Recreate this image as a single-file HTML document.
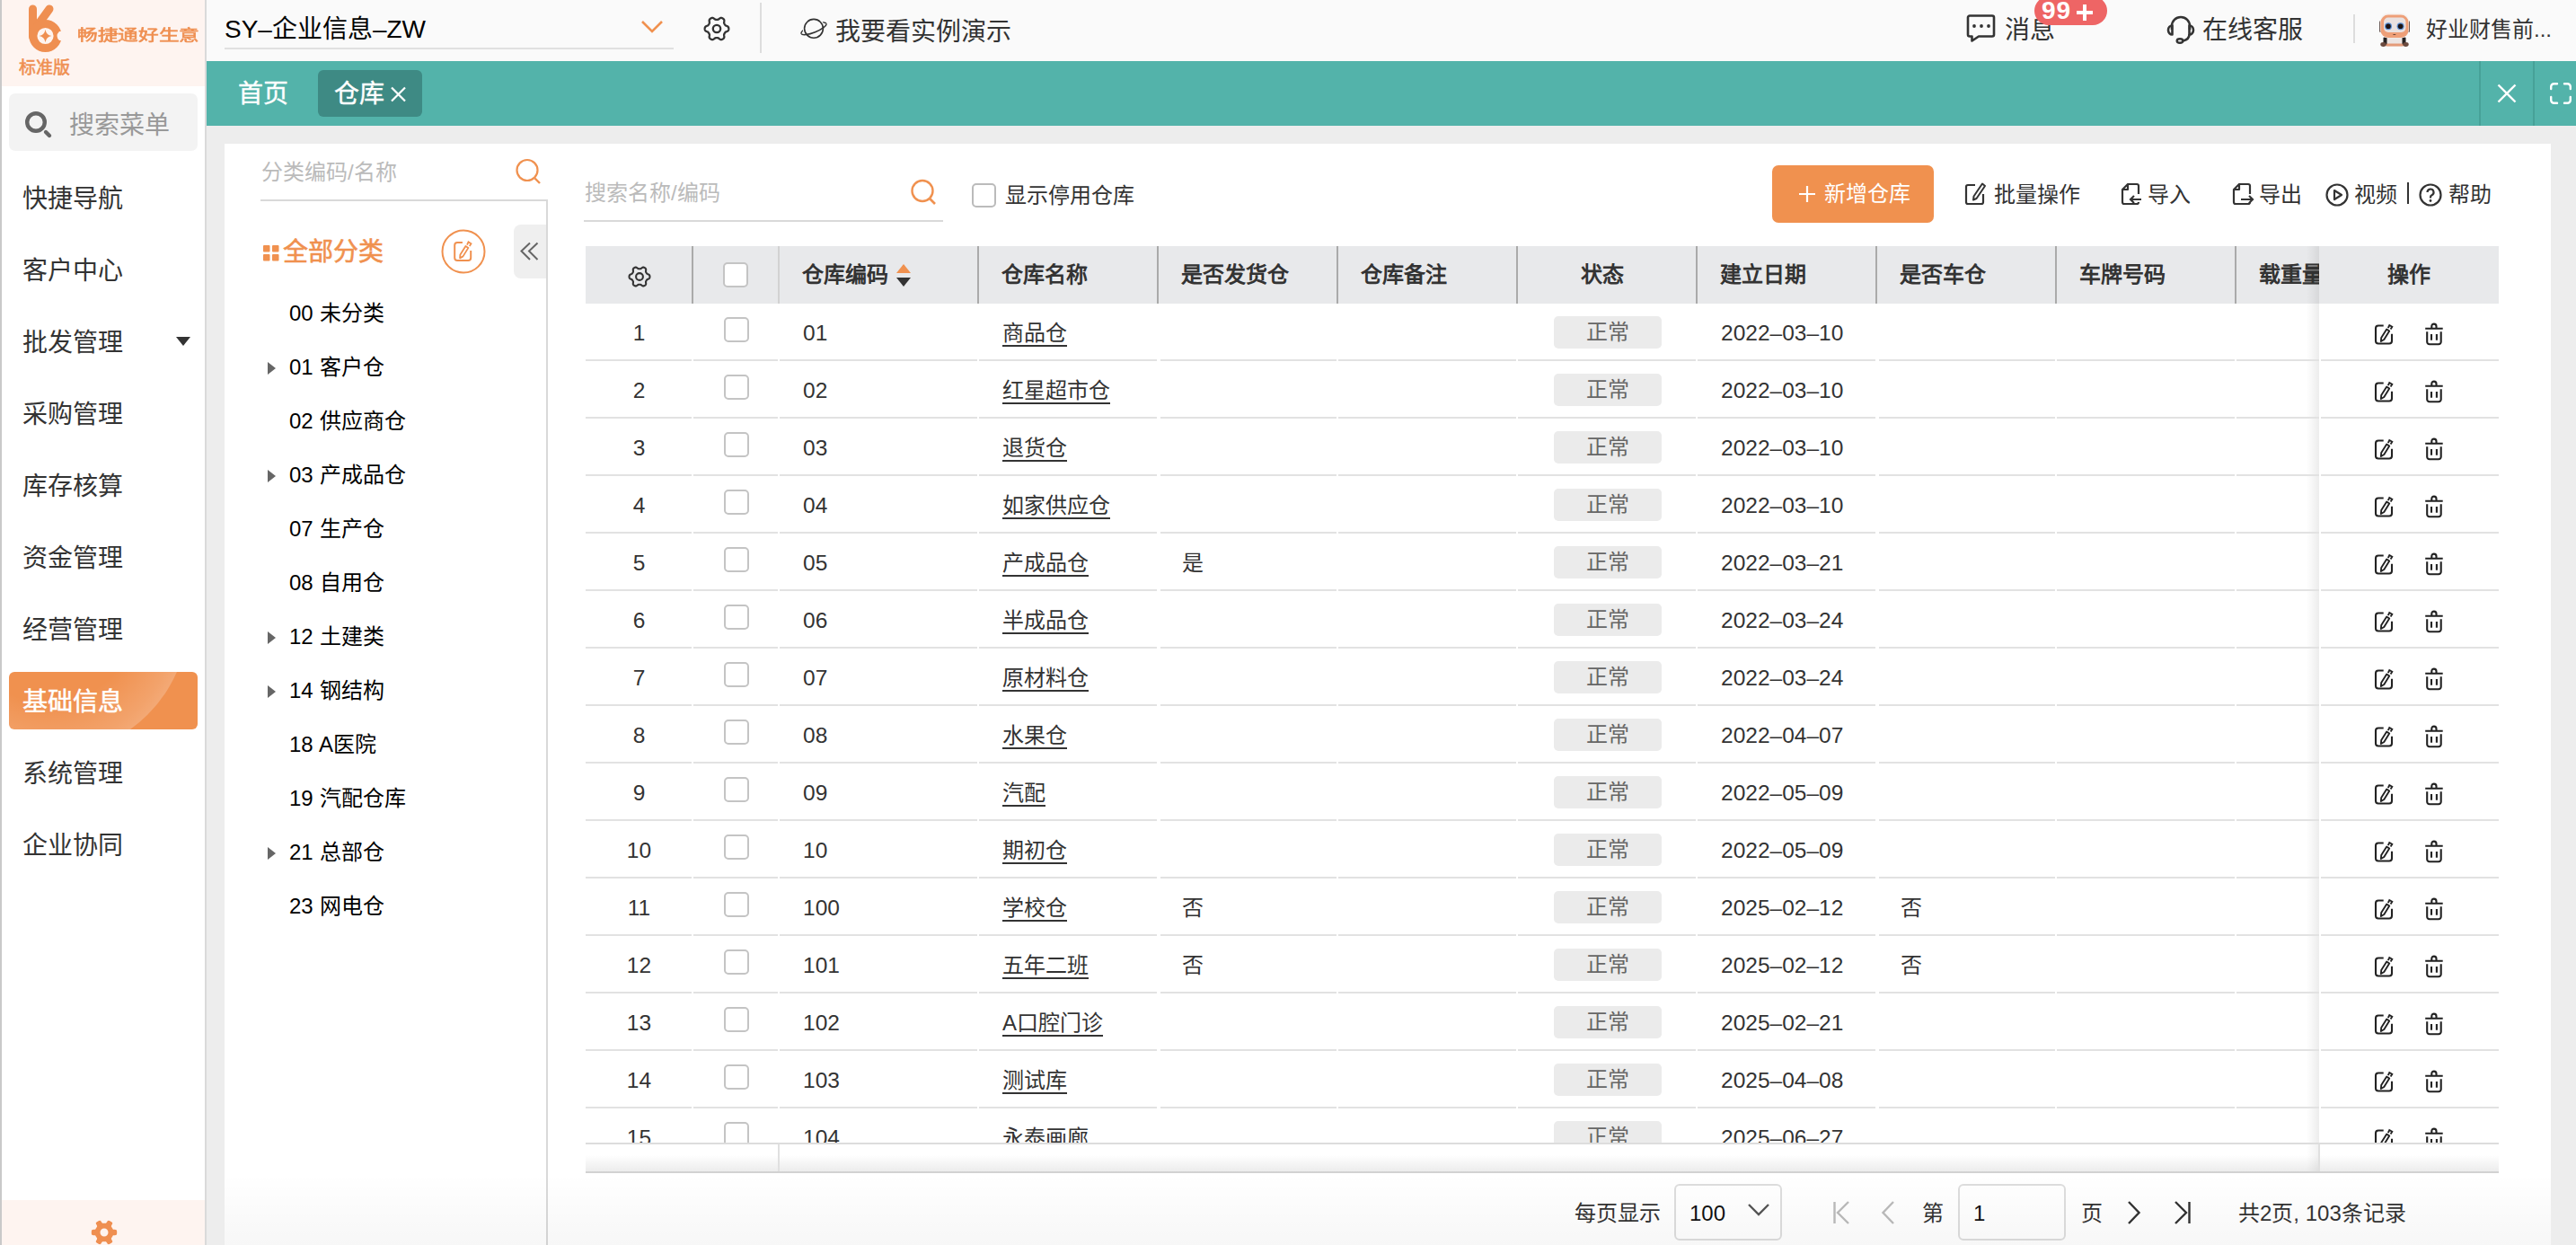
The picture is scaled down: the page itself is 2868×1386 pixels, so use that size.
<!DOCTYPE html>
<html lang="zh-CN">
<head>
<meta charset="utf-8">
<style>
*{box-sizing:border-box;margin:0;padding:0}
html,body{width:2868px;height:1386px;overflow:hidden}
body{position:relative;background:#EDEDED;font-family:"Liberation Sans",sans-serif;color:#333}
.a{position:absolute}
.t{position:absolute;white-space:nowrap;line-height:1}
svg{display:block;position:absolute}
#side{left:0;top:0;width:230px;height:1386px;background:#fff;border-left:2px solid #C9C9C9;border-right:2px solid #DADADA}
#logo{left:2px;top:0;width:226px;height:96px;background:#FEF4F0}
#logob{left:2px;top:1336px;width:226px;height:50px;background:#FEF4F0}
.menu{left:25px;font-size:28px;color:#333;height:40px;line-height:40px}
#active{left:10px;top:748px;width:210px;height:64px;border-radius:6px;background:#F0914F;overflow:hidden}
#top{left:230px;top:0;width:2638px;height:68px;background:#FAFAFA}
#tabs{left:230px;top:68px;width:2638px;height:72px;background:#53B3AA}
#card{left:250px;top:160px;width:2590px;height:1240px;background:#fff}
.hd{position:absolute;top:274px;height:64px;background:#E8E9EB}
.row{position:absolute;left:652px;width:2130px;height:64px}
.rb{position:absolute;height:2px;background:#E2E2E2}
.cb{position:absolute;width:28px;height:28px;border:2px solid #C4C4C4;border-radius:5px;background:#fff}
.badge{position:absolute;left:1078px;top:14px;width:120px;height:36px;background:#EBEBEB;border-radius:5px;color:#666;font-size:24px;line-height:36px;text-align:center}
.cell{position:absolute;font-size:24px;color:#333;white-space:nowrap;line-height:64px;top:1px}
.n{font-size:24.5px}
.lnk{text-decoration:underline;text-underline-offset:5px;text-decoration-thickness:2px}
.th{position:absolute;top:0;height:64px;line-height:64px;font-size:24px;font-weight:bold;color:#333;white-space:nowrap}
.vb{position:absolute;top:0;width:2px;height:64px;background:#AAAAAA}
.tree{position:absolute;left:322px;font-size:24px;color:#000;line-height:30px;height:30px;white-space:nowrap;word-spacing:1px}
.tri{position:absolute;left:298px;width:0;height:0;border-left:9px solid #666;border-top:7px solid transparent;border-bottom:7px solid transparent}
.tb{position:absolute;top:202px;font-size:24px;color:#333;line-height:30px;white-space:nowrap}
.pg{position:absolute;top:1336px;font-size:24px;color:#333;line-height:30px;white-space:nowrap}
</style>
</head>
<body>
<div id="side" class="a"></div>
<div id="logo" class="a"></div>
<svg style="left:0;top:0" width="80" height="64" viewBox="0 0 80 64">
<g fill="none" stroke="#EF8F51" stroke-linecap="round">
<path d="M36.5 10 V41" stroke-width="9"/>
<path d="M55 10 L42 28" stroke-width="9"/>
<circle cx="50.5" cy="40" r="13.6" stroke-width="9"/>
</g>
<path d="M66 35 Q61 40 66 45 L72 45 L72 35Z" fill="#FEF4F0"/>
<path d="M50.5 33 Q51.5 39 57.5 40 Q51.5 41 50.5 47 Q49.5 41 43.5 40 Q49.5 39 50.5 33Z" fill="#EF8F51"/>
</svg>
<div class="t" style="left:86px;top:30px;font-size:17px;color:#EF8F51;letter-spacing:0px;line-height:19px;transform:scaleX(1.335);-webkit-text-stroke:0.55px #EF8F51;transform-origin:0 0">畅捷通好生意</div>
<div class="t" style="left:21px;top:66px;font-size:19px;color:#EF8F51;line-height:19px;-webkit-text-stroke:0.55px #EF8F51">标准版</div>
<div class="a" style="left:10px;top:104px;width:210px;height:64px;border-radius:7px;background:#F3F3F3"></div>
<svg style="left:26px;top:122px" width="34" height="34" viewBox="0 0 34 34">
<circle cx="14" cy="14" r="9.8" fill="none" stroke="#666" stroke-width="4.4"/>
<path d="M25 25 L29 29" stroke="#666" stroke-width="4.4" stroke-linecap="round"/>
</svg>
<div class="t" style="left:77px;top:123px;font-size:28px;color:#999;line-height:34px">搜索菜单</div>
<div id="active" class="a"><div class="a" style="left:-111px;top:-218px;width:311px;height:311px;border-radius:50%;background:radial-gradient(circle closest-side,rgba(255,255,255,0) 62%,rgba(255,255,255,0.16) 92%,rgba(255,255,255,0.22) 100%)"></div></div>
<div class="t menu" style="top:202px;color:#333">快捷导航</div>
<div class="t menu" style="top:282px;color:#333">客户中心</div>
<div class="t menu" style="top:362px;color:#333">批发管理</div>
<div class="t menu" style="top:442px;color:#333">采购管理</div>
<div class="t menu" style="top:522px;color:#333">库存核算</div>
<div class="t menu" style="top:602px;color:#333">资金管理</div>
<div class="t menu" style="top:682px;color:#333">经营管理</div>
<div class="t menu" style="top:762px;color:#fff;-webkit-text-stroke:0.5px #fff">基础信息</div>
<div class="t menu" style="top:842px;color:#333">系统管理</div>
<div class="t menu" style="top:922px;color:#333">企业协同</div>
<div class="a" style="left:196px;top:375px;width:0;height:0;border-top:10px solid #333;border-left:8px solid transparent;border-right:8px solid transparent"></div>
<div id="logob" class="a"></div>
<svg style="left:100px;top:1356px" width="32" height="32" viewBox="0 0 32 32">
<path fill="#EF8F51" fill-rule="evenodd" d="M30.20 16.00 L30.19 16.37 L30.18 16.74 L30.15 17.11 L30.11 17.48 L30.05 17.85 L29.97 18.21 L29.81 18.56 L29.49 18.87 L28.83 19.08 L27.78 19.16 L26.74 19.18 L26.09 19.28 L25.76 19.46 L25.58 19.68 L25.45 19.91 L25.33 20.15 L25.21 20.39 L25.09 20.63 L24.96 20.87 L24.83 21.10 L24.70 21.33 L24.56 21.56 L24.41 21.78 L24.26 22.00 L24.11 22.22 L23.97 22.46 L23.88 22.73 L23.88 23.10 L24.12 23.71 L24.63 24.63 L25.09 25.57 L25.23 26.25 L25.12 26.68 L24.90 26.99 L24.63 27.25 L24.34 27.48 L24.04 27.70 L23.73 27.91 L23.42 28.11 L23.10 28.30 L22.78 28.48 L22.45 28.65 L22.11 28.81 L21.77 28.96 L21.42 29.10 L21.07 29.20 L20.69 29.24 L20.26 29.12 L19.75 28.66 L19.16 27.78 L18.61 26.89 L18.21 26.38 L17.89 26.18 L17.61 26.13 L17.33 26.14 L17.07 26.15 L16.80 26.17 L16.53 26.19 L16.27 26.20 L16.00 26.20 L15.73 26.20 L15.47 26.19 L15.20 26.17 L14.93 26.15 L14.67 26.14 L14.39 26.13 L14.11 26.18 L13.79 26.38 L13.39 26.89 L12.84 27.78 L12.25 28.66 L11.74 29.12 L11.31 29.24 L10.93 29.20 L10.58 29.10 L10.23 28.96 L9.89 28.81 L9.55 28.65 L9.22 28.48 L8.90 28.30 L8.58 28.11 L8.27 27.91 L7.96 27.70 L7.66 27.48 L7.37 27.25 L7.10 26.99 L6.88 26.68 L6.77 26.25 L6.91 25.57 L7.37 24.63 L7.88 23.71 L8.12 23.10 L8.12 22.73 L8.03 22.46 L7.89 22.22 L7.74 22.00 L7.59 21.78 L7.44 21.56 L7.30 21.33 L7.17 21.10 L7.04 20.87 L6.91 20.63 L6.79 20.39 L6.67 20.15 L6.55 19.91 L6.42 19.68 L6.24 19.46 L5.91 19.28 L5.26 19.18 L4.22 19.16 L3.17 19.08 L2.51 18.87 L2.19 18.56 L2.03 18.21 L1.95 17.85 L1.89 17.48 L1.85 17.11 L1.82 16.74 L1.81 16.37 L1.80 16.00 L1.81 15.63 L1.82 15.26 L1.85 14.89 L1.89 14.52 L1.95 14.15 L2.03 13.79 L2.19 13.44 L2.51 13.13 L3.17 12.92 L4.22 12.84 L5.26 12.82 L5.91 12.72 L6.24 12.54 L6.42 12.32 L6.55 12.09 L6.67 11.85 L6.79 11.61 L6.91 11.37 L7.04 11.13 L7.17 10.90 L7.30 10.67 L7.44 10.44 L7.59 10.22 L7.74 10.00 L7.89 9.78 L8.03 9.54 L8.12 9.27 L8.12 8.90 L7.88 8.29 L7.37 7.37 L6.91 6.43 L6.77 5.75 L6.88 5.32 L7.10 5.01 L7.37 4.75 L7.66 4.52 L7.96 4.30 L8.27 4.09 L8.58 3.89 L8.90 3.70 L9.22 3.52 L9.55 3.35 L9.89 3.19 L10.23 3.04 L10.58 2.90 L10.93 2.80 L11.31 2.76 L11.74 2.88 L12.25 3.34 L12.84 4.22 L13.39 5.11 L13.79 5.62 L14.11 5.82 L14.39 5.87 L14.67 5.86 L14.93 5.85 L15.20 5.83 L15.47 5.81 L15.73 5.80 L16.00 5.80 L16.27 5.80 L16.53 5.81 L16.80 5.83 L17.07 5.85 L17.33 5.86 L17.61 5.87 L17.89 5.82 L18.21 5.62 L18.61 5.11 L19.16 4.22 L19.75 3.34 L20.26 2.88 L20.69 2.76 L21.07 2.80 L21.42 2.90 L21.77 3.04 L22.11 3.19 L22.45 3.35 L22.78 3.52 L23.10 3.70 L23.42 3.89 L23.73 4.09 L24.04 4.30 L24.34 4.52 L24.63 4.75 L24.90 5.01 L25.12 5.32 L25.23 5.75 L25.09 6.43 L24.63 7.37 L24.12 8.29 L23.88 8.90 L23.88 9.27 L23.97 9.54 L24.11 9.78 L24.26 10.00 L24.41 10.22 L24.56 10.44 L24.70 10.67 L24.83 10.90 L24.96 11.13 L25.09 11.37 L25.21 11.61 L25.33 11.85 L25.45 12.09 L25.58 12.32 L25.76 12.54 L26.09 12.72 L26.74 12.82 L27.78 12.84 L28.83 12.92 L29.49 13.13 L29.81 13.44 L29.97 13.79 L30.05 14.15 L30.11 14.52 L30.15 14.89 L30.18 15.26 L30.19 15.63Z M20.5 16 A4.5 4.5 0 1 0 11.5 16 A4.5 4.5 0 1 0 20.5 16Z"/>
</svg>
<div id="top" class="a"></div>
<div class="t" style="left:250px;top:16px;font-size:28px;color:#000;line-height:34px">SY–企业信息–ZW</div>
<div class="a" style="left:250px;top:53px;width:500px;height:2px;background:#E0E0E0"></div>
<svg style="left:713px;top:22px" width="26" height="16" viewBox="0 0 26 16"><path d="M2 2 L13 13 L24 2" fill="none" stroke="#F0914F" stroke-width="2.6"/></svg>
<svg style="left:782px;top:17px" width="32" height="30" viewBox="0 0 32 30">
<path fill="none" stroke="#333" stroke-width="2.3" stroke-linejoin="round" d="M29.30 15.00 L29.29 15.35 L29.26 15.69 L29.20 16.04 L29.11 16.38 L28.98 16.71 L28.79 17.03 L28.53 17.32 L28.19 17.59 L27.77 17.83 L27.30 18.03 L26.83 18.21 L26.40 18.38 L26.04 18.56 L25.76 18.74 L25.53 18.95 L25.34 19.16 L25.17 19.37 L25.02 19.60 L24.88 19.82 L24.75 20.05 L24.62 20.28 L24.49 20.51 L24.37 20.76 L24.27 21.01 L24.18 21.28 L24.12 21.58 L24.10 21.92 L24.13 22.32 L24.19 22.77 L24.27 23.27 L24.33 23.78 L24.34 24.26 L24.28 24.69 L24.15 25.06 L23.97 25.38 L23.75 25.66 L23.50 25.91 L23.23 26.13 L22.95 26.33 L22.65 26.52 L22.34 26.68 L22.03 26.83 L21.70 26.95 L21.36 27.04 L21.01 27.09 L20.64 27.09 L20.25 27.02 L19.85 26.86 L19.44 26.61 L19.03 26.30 L18.64 25.98 L18.27 25.70 L17.94 25.47 L17.63 25.32 L17.35 25.22 L17.07 25.16 L16.80 25.13 L16.53 25.11 L16.26 25.10 L16.00 25.10 L15.74 25.10 L15.47 25.11 L15.20 25.13 L14.93 25.16 L14.65 25.22 L14.37 25.32 L14.06 25.47 L13.73 25.70 L13.36 25.98 L12.97 26.30 L12.56 26.61 L12.15 26.86 L11.75 27.02 L11.36 27.09 L10.99 27.09 L10.64 27.04 L10.30 26.95 L9.97 26.83 L9.66 26.68 L9.35 26.52 L9.05 26.33 L8.77 26.13 L8.50 25.91 L8.25 25.66 L8.03 25.38 L7.85 25.06 L7.72 24.69 L7.66 24.26 L7.67 23.78 L7.73 23.27 L7.81 22.77 L7.87 22.32 L7.90 21.92 L7.88 21.58 L7.82 21.28 L7.73 21.01 L7.63 20.76 L7.51 20.51 L7.38 20.28 L7.25 20.05 L7.12 19.82 L6.98 19.60 L6.83 19.37 L6.66 19.16 L6.47 18.95 L6.24 18.74 L5.96 18.56 L5.60 18.38 L5.17 18.21 L4.70 18.03 L4.23 17.83 L3.81 17.59 L3.47 17.32 L3.21 17.03 L3.02 16.71 L2.89 16.38 L2.80 16.04 L2.74 15.69 L2.71 15.35 L2.70 15.00 L2.71 14.65 L2.74 14.31 L2.80 13.96 L2.89 13.62 L3.02 13.29 L3.21 12.97 L3.47 12.68 L3.81 12.41 L4.23 12.17 L4.70 11.97 L5.17 11.79 L5.60 11.62 L5.96 11.44 L6.24 11.26 L6.47 11.05 L6.66 10.84 L6.83 10.63 L6.98 10.40 L7.12 10.18 L7.25 9.95 L7.38 9.72 L7.51 9.49 L7.63 9.24 L7.73 8.99 L7.82 8.72 L7.88 8.42 L7.90 8.08 L7.87 7.68 L7.81 7.23 L7.73 6.73 L7.67 6.22 L7.66 5.74 L7.72 5.31 L7.85 4.94 L8.03 4.62 L8.25 4.34 L8.50 4.09 L8.77 3.87 L9.05 3.67 L9.35 3.48 L9.66 3.32 L9.97 3.17 L10.30 3.05 L10.64 2.96 L10.99 2.91 L11.36 2.91 L11.75 2.98 L12.15 3.14 L12.56 3.39 L12.97 3.70 L13.36 4.02 L13.73 4.30 L14.06 4.53 L14.37 4.68 L14.65 4.78 L14.93 4.84 L15.20 4.87 L15.47 4.89 L15.74 4.90 L16.00 4.90 L16.26 4.90 L16.53 4.89 L16.80 4.87 L17.07 4.84 L17.35 4.78 L17.63 4.68 L17.94 4.53 L18.27 4.30 L18.64 4.02 L19.03 3.70 L19.44 3.39 L19.85 3.14 L20.25 2.98 L20.64 2.91 L21.01 2.91 L21.36 2.96 L21.70 3.05 L22.03 3.17 L22.34 3.32 L22.65 3.48 L22.95 3.67 L23.23 3.87 L23.50 4.09 L23.75 4.34 L23.97 4.62 L24.15 4.94 L24.28 5.31 L24.34 5.74 L24.33 6.22 L24.27 6.73 L24.19 7.23 L24.13 7.68 L24.10 8.08 L24.12 8.42 L24.18 8.72 L24.27 8.99 L24.37 9.24 L24.49 9.49 L24.62 9.72 L24.75 9.95 L24.88 10.18 L25.02 10.40 L25.17 10.63 L25.34 10.84 L25.53 11.05 L25.76 11.26 L26.04 11.44 L26.40 11.62 L26.83 11.79 L27.30 11.97 L27.77 12.17 L28.19 12.41 L28.53 12.68 L28.79 12.97 L28.98 13.29 L29.11 13.62 L29.20 13.96 L29.26 14.31 L29.29 14.65Z"/>
<circle cx="16" cy="15" r="4.2" fill="none" stroke="#333" stroke-width="2.3"/>
</svg>
<div class="a" style="left:846px;top:3px;width:2px;height:56px;background:#DDDDDD"></div>
<svg style="left:889px;top:19px" width="34" height="26" viewBox="0 0 34 26">
<defs><mask id="pm"><rect x="0" y="0" width="34" height="26" fill="#fff"/><circle cx="17" cy="12.8" r="12.3" fill="#000"/></mask></defs>
<circle cx="17" cy="12.8" r="10.4" fill="none" stroke="#333" stroke-width="1.6"/>
<g transform="rotate(-22 17 12.8)">
<path d="M2 12.8 A15 4.2 0 0 0 32 12.8" fill="none" stroke="#333" stroke-width="1.5"/>
<path d="M2 12.8 A15 4.2 0 0 1 32 12.8" fill="none" stroke="#333" stroke-width="1.5" mask="url(#pm)"/>
</g>
</svg>
<div class="t" style="left:930px;top:19px;font-size:28px;color:#333;line-height:34px">我要看实例演示</div>
<svg style="left:2188px;top:14px" width="36" height="36" viewBox="0 0 36 36">
<path d="M5 3.5h25a2 2 0 0 1 2 2v19a2 2 0 0 1-2 2H15l-7.5 5v-5H5a2 2 0 0 1-2-2v-19a2 2 0 0 1 2-2z" fill="none" stroke="#333" stroke-width="2.6" stroke-linejoin="round"/>
<circle cx="10" cy="15" r="1.9" fill="#333"/><circle cx="18" cy="15" r="1.9" fill="#333"/><circle cx="26" cy="15" r="1.9" fill="#333"/>
</svg>
<div class="t" style="left:2232px;top:17px;font-size:28px;color:#333;line-height:34px">消息</div>
<div class="a" style="left:2265px;top:-4px;width:81px;height:32px;border-radius:16px;background:#EE6565"></div>
<div class="t" style="left:2273px;top:0px;font-size:28px;font-weight:bold;color:#fff;line-height:24px;letter-spacing:1px">99</div>
<svg style="left:2311px;top:4px" width="20" height="20" viewBox="0 0 20 20"><path d="M10 1 V19 M1 10 H19" stroke="#fff" stroke-width="4"/></svg>
<svg style="left:2412px;top:15px" width="32" height="34" viewBox="0 0 32 34">
<path d="M6 18 V14 a10 10 0 0 1 20 0 V18" fill="none" stroke="#333" stroke-width="2.6"/>
<path d="M6.5 13.5 a4.5 5 0 0 0 0 10 z" fill="none" stroke="#333" stroke-width="2.6" stroke-linejoin="round"/>
<path d="M25.5 13.5 a4.5 5 0 0 1 0 10 z" fill="none" stroke="#333" stroke-width="2.6" stroke-linejoin="round"/>
<path d="M25.5 23 q0 6 -7 7.5" fill="none" stroke="#333" stroke-width="2.6"/>
<ellipse cx="15" cy="30.5" rx="3.3" ry="2.2" fill="none" stroke="#333" stroke-width="2.4"/>
</svg>
<div class="t" style="left:2452px;top:17px;font-size:28px;color:#333;line-height:34px">在线客服</div>
<div class="a" style="left:2620px;top:16px;width:2px;height:32px;background:#DDDDDD"></div>
<svg style="left:2647px;top:13px" width="38" height="40" viewBox="0 0 38 40">
<rect x="8" y="28.5" width="22" height="10" rx="2.5" fill="#ECE4E2"/>
<rect x="9" y="35.5" width="20" height="3" rx="1.2" fill="#E49A78"/>
<rect x="6.5" y="28.5" width="4" height="8" rx="1" fill="#262222"/><rect x="27.5" y="28.5" width="4" height="8" rx="1" fill="#262222"/>
<ellipse cx="6.5" cy="36.5" rx="3.2" ry="2.4" fill="#6B4A3E"/><ellipse cx="31.5" cy="36.5" rx="3.2" ry="2.4" fill="#6B4A3E"/>
<rect x="2" y="10" width="3.5" height="13" rx="1.5" fill="#6A5A56"/><rect x="32.5" y="10" width="3.5" height="13" rx="1.5" fill="#6A5A56"/>
<rect x="3" y="1.5" width="32" height="28" rx="9" fill="#F6F2F0"/>
<rect x="3.5" y="3.5" width="31" height="25.5" rx="8.5" fill="#EE9F78"/>
<rect x="7" y="6.5" width="24.5" height="16.5" rx="5" fill="#E9E1E0"/>
<circle cx="12" cy="16.2" r="4" fill="#5A8FD4"/><circle cx="25.6" cy="16.2" r="4" fill="#5A8FD4"/>
<circle cx="12" cy="16.2" r="2.8" fill="#1E1414"/><circle cx="25.6" cy="16.2" r="2.8" fill="#1E1414"/>
<path d="M16.8 25 q2 2 4 0z" fill="#5A3A30"/>
</svg>
<div class="t" style="left:2701px;top:16px;font-size:24px;color:#333;line-height:34px">好业财售前...</div>
<div id="tabs" class="a"></div>
<div class="t" style="left:265px;top:88px;font-size:28px;color:#fff;line-height:34px;-webkit-text-stroke:0.4px #fff">首页</div>
<div class="a" style="left:354px;top:78px;width:116px;height:52px;border-radius:6px;background:#3E8A84"></div>
<div class="t" style="left:372px;top:88px;font-size:28px;color:#fff;line-height:34px;-webkit-text-stroke:0.4px #fff">仓库</div>
<svg style="left:434px;top:96px" width="20" height="18" viewBox="0 0 20 18"><path d="M2 1.5 L17 16.5 M17 1.5 L2 16.5" stroke="#fff" stroke-width="2.2"/></svg>
<div class="a" style="left:2760px;top:68px;width:2px;height:72px;background:#47A198"></div>
<div class="a" style="left:2820px;top:68px;width:2px;height:72px;background:#47A198"></div>
<svg style="left:2780px;top:93px" width="22" height="22" viewBox="0 0 22 22"><path d="M1.5 1.5 L20.5 20.5 M20.5 1.5 L1.5 20.5" stroke="#fff" stroke-width="2.4"/></svg>
<svg style="left:2838px;top:91px" width="26" height="26" viewBox="0 0 26 26"><path d="M2.2 8 V5.5 a3.3 3.3 0 0 1 3.3-3.3 H9 M17 2.2 H20.5 a3.3 3.3 0 0 1 3.3 3.3 V8 M23.8 17 V20.5 a3.3 3.3 0 0 1-3.3 3.3 H17 M9 23.8 H5.5 a3.3 3.3 0 0 1-3.3-3.3 V17" fill="none" stroke="#fff" stroke-width="2.4" stroke-linecap="round"/></svg>
<div id="card" class="a"></div>
<div class="t" style="left:291px;top:177px;font-size:24px;color:#BBBBBB;line-height:30px">分类编码/名称</div>
<svg style="left:572px;top:174px" width="32" height="32" viewBox="0 0 32 32"><circle cx="15" cy="15.5" r="11.5" fill="none" stroke="#F0914F" stroke-width="2.2"/><path d="M23.5 24.5 L29 30" stroke="#F0914F" stroke-width="2.4"/></svg>
<div class="a" style="left:290px;top:222px;width:320px;height:2px;background:#D9D9D9"></div>
<div class="a" style="left:608px;top:222px;width:2px;height:1170px;background:#D9D9D9"></div>
<svg style="left:293px;top:273px" width="18" height="18" viewBox="0 0 18 18" fill="#F0914F"><rect x="0" y="0" width="7.5" height="7.5" rx="1"/><rect x="10" y="0" width="7.5" height="7.5" rx="1"/><rect x="0" y="10" width="7.5" height="7.5" rx="1"/><rect x="10" y="10" width="7.5" height="7.5" rx="1"/></svg>
<div class="t" style="left:315px;top:264px;font-size:28px;color:#F0914F;line-height:34px;-webkit-text-stroke:0.6px #F0914F">全部分类</div>
<svg style="left:491px;top:255px" width="50" height="50" viewBox="0 0 50 50">
<circle cx="25" cy="25" r="23.5" fill="none" stroke="#F0914F" stroke-width="2"/>
<g transform="translate(13.2 11.4)">
<path d="M10.7 3.5 H5 a3 3 0 0 0-3 3 V20.5 a3 3 0 0 0 3 3 H17 a3 3 0 0 0 3-3 V12.7" fill="none" stroke="#F0914F" stroke-width="2"/>
<path d="M7.9 21 L8.2 17 L14.2 7.6 L17.2 9.5 L11.3 19 Z" fill="none" stroke="#F0914F" stroke-width="1.8" stroke-linejoin="round"/>
<path d="M15.8 6.2 L17.3 3 L20.3 4.8 L18.6 7.6" fill="none" stroke="#F0914F" stroke-width="1.8"/>
</g>
</svg>
<div class="a" style="left:572px;top:250px;width:36px;height:60px;border-radius:8px 0 0 8px;background:#EFEFEF"></div>
<svg style="left:578px;top:268px" width="24" height="24" viewBox="0 0 24 24"><path d="M12 2.5 L2.5 11.5 L12 21 M20.5 2.5 L11 11.5 L20.5 21" fill="none" stroke="#666" stroke-width="2"/></svg>
<div class="tree" style="top:334px">00 未分类</div>
<div class="tree" style="top:394px">01 客户仓</div>
<div class="tri" style="top:403px"></div>
<div class="tree" style="top:454px">02 供应商仓</div>
<div class="tree" style="top:514px">03 产成品仓</div>
<div class="tri" style="top:523px"></div>
<div class="tree" style="top:574px">07 生产仓</div>
<div class="tree" style="top:634px">08 自用仓</div>
<div class="tree" style="top:694px">12 土建类</div>
<div class="tri" style="top:703px"></div>
<div class="tree" style="top:754px">14 钢结构</div>
<div class="tri" style="top:763px"></div>
<div class="tree" style="top:814px">18 A医院</div>
<div class="tree" style="top:874px">19 汽配仓库</div>
<div class="tree" style="top:934px">21 总部仓</div>
<div class="tri" style="top:943px"></div>
<div class="tree" style="top:994px">23 网电仓</div>
<div class="t" style="left:651px;top:200px;font-size:24px;color:#BBBBBB;line-height:30px">搜索名称/编码</div>
<svg style="left:1012px;top:197px" width="32" height="32" viewBox="0 0 32 32"><circle cx="15" cy="15.5" r="11.5" fill="none" stroke="#F0914F" stroke-width="2.4"/><path d="M23.5 24.5 L29 30" stroke="#F0914F" stroke-width="2.6"/></svg>
<div class="a" style="left:650px;top:245px;width:400px;height:2px;background:#D9D9D9"></div>
<div class="a" style="left:1082px;top:204px;width:27px;height:27px;border:2px solid #BBBBBB;border-radius:5px"></div>
<div class="t" style="left:1119px;top:203px;font-size:24px;color:#333;line-height:30px">显示停用仓库</div>
<div class="a" style="left:1973px;top:184px;width:180px;height:64px;border-radius:7px;background:#F0914F"></div>
<svg style="left:2002px;top:206px" width="20" height="20" viewBox="0 0 20 20"><path d="M10 1 V19 M1 10 H19" stroke="#fff" stroke-width="2.2"/></svg>
<div class="t" style="left:2031px;top:201px;font-size:24px;color:#fff;line-height:30px">新增仓库</div>
<svg style="left:2187px;top:202px" width="26" height="28" viewBox="0 0 26 28">
<path d="M12 4 H4 a2 2 0 0 0-2 2 V23 a2 2 0 0 0 2 2 H19 a2 2 0 0 0 2-2 V14" fill="none" stroke="#333" stroke-width="2.2"/>
<path d="M20 2.5 L23 5 L13.5 19 L10 20.5 L10.5 16.5 Z" fill="none" stroke="#333" stroke-width="2" stroke-linejoin="round"/>
</svg>
<div class="tb" style="left:2220px">批量操作</div>
<svg style="left:2360px;top:202px" width="26" height="28" viewBox="0 0 26 28">
<path d="M9 3 H19 a2 2 0 0 1 2 2 V14 M21 23 V23 a2 2 0 0 1-2 2 H5 a2 2 0 0 1-2-2 V9 L9 3 V9 H3" fill="none" stroke="#333" stroke-width="2.2" stroke-linejoin="round"/>
<path d="M24 20 H12 M16 16 L12 20 L16 24" fill="none" stroke="#333" stroke-width="2.2"/>
</svg>
<div class="tb" style="left:2391px">导入</div>
<svg style="left:2484px;top:202px" width="26" height="28" viewBox="0 0 26 28">
<path d="M9 3 H19 a2 2 0 0 1 2 2 V14 M21 23 V23 a2 2 0 0 1-2 2 H5 a2 2 0 0 1-2-2 V9 L9 3 V9 H3" fill="none" stroke="#333" stroke-width="2.2" stroke-linejoin="round"/>
<path d="M11 20 H24 M20 16 L24 20 L20 24" fill="none" stroke="#333" stroke-width="2.2"/>
</svg>
<div class="tb" style="left:2515px">导出</div>
<svg style="left:2588px;top:203px" width="28" height="28" viewBox="0 0 28 28"><circle cx="14" cy="14" r="11.5" fill="none" stroke="#333" stroke-width="2.2"/><path d="M11 9 L19 14 L11 19 Z" fill="none" stroke="#333" stroke-width="2.2" stroke-linejoin="round"/></svg>
<div class="tb" style="left:2621px">视频</div>
<div class="a" style="left:2680px;top:203px;width:2px;height:24px;background:#333"></div>
<svg style="left:2692px;top:203px" width="28" height="28" viewBox="0 0 28 28"><circle cx="14" cy="14" r="11.5" fill="none" stroke="#333" stroke-width="2.2"/><path d="M10.5 11 a3.5 3.5 0 1 1 5 3.2 c-1 .5-1.5 1.2-1.5 2.3 V17.5" fill="none" stroke="#333" stroke-width="2.2"/><circle cx="14" cy="20.5" r="1.4" fill="#333"/></svg>
<div class="tb" style="left:2726px">帮助</div>
<div class="hd" style="left:652px;width:2130px"></div>
<div class="a" style="left:652px;top:274px;width:2130px;height:64px"><svg style="left:46px;top:20px" width="28" height="28" viewBox="0 0 28 28"><path fill="none" stroke="#333" stroke-width="2.1" stroke-linejoin="round" d="M25.45 14.00 L25.44 14.30 L25.41 14.60 L25.36 14.89 L25.29 15.19 L25.18 15.47 L25.02 15.75 L24.80 16.00 L24.51 16.23 L24.16 16.44 L23.76 16.61 L23.35 16.77 L22.99 16.92 L22.69 17.08 L22.44 17.24 L22.25 17.42 L22.09 17.60 L21.94 17.79 L21.82 17.98 L21.69 18.18 L21.58 18.38 L21.46 18.57 L21.36 18.78 L21.25 18.99 L21.16 19.20 L21.08 19.43 L21.03 19.69 L21.01 19.99 L21.03 20.33 L21.08 20.72 L21.14 21.14 L21.19 21.58 L21.19 21.99 L21.13 22.35 L21.02 22.67 L20.86 22.94 L20.67 23.18 L20.46 23.39 L20.22 23.59 L19.98 23.76 L19.73 23.92 L19.46 24.06 L19.19 24.18 L18.91 24.29 L18.62 24.37 L18.31 24.41 L18.00 24.41 L17.67 24.35 L17.32 24.22 L16.97 24.01 L16.61 23.76 L16.28 23.49 L15.97 23.25 L15.68 23.06 L15.41 22.93 L15.17 22.85 L14.93 22.80 L14.69 22.77 L14.46 22.76 L14.23 22.75 L14.00 22.75 L13.77 22.75 L13.54 22.76 L13.31 22.77 L13.07 22.80 L12.83 22.85 L12.59 22.93 L12.32 23.06 L12.03 23.25 L11.72 23.49 L11.39 23.76 L11.03 24.01 L10.68 24.22 L10.33 24.35 L10.00 24.41 L9.69 24.41 L9.38 24.37 L9.09 24.29 L8.81 24.18 L8.54 24.06 L8.28 23.92 L8.02 23.76 L7.78 23.59 L7.54 23.39 L7.33 23.18 L7.14 22.94 L6.98 22.67 L6.87 22.35 L6.81 21.99 L6.81 21.58 L6.86 21.14 L6.92 20.72 L6.97 20.33 L6.99 19.99 L6.97 19.69 L6.92 19.43 L6.84 19.20 L6.75 18.99 L6.64 18.78 L6.54 18.57 L6.42 18.38 L6.31 18.18 L6.18 17.98 L6.06 17.79 L5.91 17.60 L5.75 17.42 L5.56 17.24 L5.31 17.08 L5.01 16.92 L4.65 16.77 L4.24 16.61 L3.84 16.44 L3.49 16.23 L3.20 16.00 L2.98 15.75 L2.82 15.47 L2.71 15.19 L2.64 14.89 L2.59 14.60 L2.56 14.30 L2.55 14.00 L2.56 13.70 L2.59 13.40 L2.64 13.11 L2.71 12.81 L2.82 12.53 L2.98 12.25 L3.20 12.00 L3.49 11.77 L3.84 11.56 L4.24 11.39 L4.65 11.23 L5.01 11.08 L5.31 10.92 L5.56 10.76 L5.75 10.58 L5.91 10.40 L6.06 10.21 L6.18 10.02 L6.31 9.82 L6.42 9.63 L6.54 9.43 L6.64 9.22 L6.75 9.01 L6.84 8.80 L6.92 8.57 L6.97 8.31 L6.99 8.01 L6.97 7.67 L6.92 7.28 L6.86 6.86 L6.81 6.42 L6.81 6.01 L6.87 5.65 L6.98 5.33 L7.14 5.06 L7.33 4.82 L7.54 4.61 L7.78 4.41 L8.02 4.24 L8.27 4.08 L8.54 3.94 L8.81 3.82 L9.09 3.71 L9.38 3.63 L9.69 3.59 L10.00 3.59 L10.33 3.65 L10.68 3.78 L11.03 3.99 L11.39 4.24 L11.72 4.51 L12.03 4.75 L12.32 4.94 L12.59 5.07 L12.83 5.15 L13.07 5.20 L13.31 5.23 L13.54 5.24 L13.77 5.25 L14.00 5.25 L14.23 5.25 L14.46 5.24 L14.69 5.23 L14.93 5.20 L15.17 5.15 L15.41 5.07 L15.68 4.94 L15.97 4.75 L16.28 4.51 L16.61 4.24 L16.97 3.99 L17.32 3.78 L17.67 3.65 L18.00 3.59 L18.31 3.59 L18.62 3.63 L18.91 3.71 L19.19 3.82 L19.46 3.94 L19.73 4.08 L19.98 4.24 L20.22 4.41 L20.46 4.61 L20.67 4.82 L20.86 5.06 L21.02 5.33 L21.13 5.65 L21.19 6.01 L21.19 6.42 L21.14 6.86 L21.08 7.28 L21.03 7.67 L21.01 8.01 L21.03 8.31 L21.08 8.57 L21.16 8.80 L21.25 9.01 L21.36 9.22 L21.46 9.43 L21.58 9.63 L21.69 9.82 L21.82 10.02 L21.94 10.21 L22.09 10.40 L22.25 10.58 L22.44 10.76 L22.69 10.92 L22.99 11.08 L23.35 11.23 L23.76 11.39 L24.16 11.56 L24.51 11.77 L24.80 12.00 L25.02 12.25 L25.18 12.53 L25.29 12.81 L25.36 13.11 L25.41 13.40 L25.44 13.70Z"/><circle cx="14" cy="14" r="3.9" fill="none" stroke="#333" stroke-width="2.1"/></svg><div class="vb" style="left:118px"></div><div class="cb" style="left:153px;top:18px"></div><div class="vb" style="left:214px;background:#D2D2D2"></div><div class="th" style="left:241px">仓库编码</div><div class="a" style="left:346px;top:20px;width:0;height:0;border-bottom:10px solid #F0914F;border-left:8px solid transparent;border-right:8px solid transparent"></div><div class="a" style="left:346px;top:35px;width:0;height:0;border-top:10px solid #333;border-left:8px solid transparent;border-right:8px solid transparent"></div><div class="vb" style="left:436px"></div><div class="th" style="left:463px">仓库名称</div><div class="vb" style="left:636px"></div><div class="th" style="left:663px">是否发货仓</div><div class="vb" style="left:836px"></div><div class="th" style="left:863px">仓库备注</div><div class="vb" style="left:1036px"></div><div class="vb" style="left:1236px"></div><div class="th" style="left:1263px">建立日期</div><div class="vb" style="left:1436px"></div><div class="th" style="left:1463px">是否车仓</div><div class="vb" style="left:1636px"></div><div class="th" style="left:1663px">车牌号码</div><div class="vb" style="left:1836px"></div><div class="th" style="left:1863px">载重量</div><div class="th" style="left:1032px;width:200px;text-align:center">状态</div><div class="a" style="left:1916px;top:0;width:14px;height:64px;background:linear-gradient(to right,rgba(0,0,0,0),rgba(0,0,0,0.075))"></div><div class="a" style="left:1930px;top:0;width:200px;height:64px;background:#E8E9EB"></div><div class="th" style="left:1930px;width:200px;text-align:center">操作</div></div>
<div class="a" style="left:652px;top:338px;width:2130px;height:934px;overflow:hidden"><div class="row" style="left:0;top:0px"><div class="cell n" style="left:0;width:119px;text-align:center">1</div><div class="cb" style="left:154px;top:15px"></div><div class="cell n" style="left:242px">01</div><div class="cell lnk" style="left:464px">商品仓</div><div class="badge">正常</div><div class="cell n" style="left:1264px">2022–03–10</div><div class="a" style="left:1916px;top:0;width:14px;height:64px;background:linear-gradient(to right,rgba(0,0,0,0),rgba(0,0,0,0.075))"></div><div class="a" style="left:1930px;top:0;width:200px;height:64px;background:#fff"></div><svg style="left:1991px;top:21px" width="24" height="26" viewBox="0 0 24 26"><path d="M10.7 3.5 H5 a3 3 0 0 0-3 3 V20.5 a3 3 0 0 0 3 3 H17 a3 3 0 0 0 3-3 V12.7" fill="none" stroke="#222" stroke-width="2.1"/><path d="M7.9 21 L8.2 17 L14.2 7.6 L17.2 9.5 L11.3 19 Z" fill="none" stroke="#222" stroke-width="1.9" stroke-linejoin="round"/><path d="M15.8 6.2 L17.3 3 L20.3 4.8 L18.6 7.6" fill="none" stroke="#222" stroke-width="1.9"/></svg><svg style="left:2047px;top:21px" width="24" height="26" viewBox="0 0 24 26"><path d="M1.2 6.8 H20.7 M8.3 6.5 V4.2 a2.6 2.6 0 0 1 5.2 0 V6.5 M3.2 10.2 V21.5 a2.7 2.7 0 0 0 2.7 2.7 H16 a2.7 2.7 0 0 0 2.7-2.7 V10.2 M8 13 V19.8 M13.9 13 V19.8" fill="none" stroke="#222" stroke-width="2.1"/></svg><div class="rb" style="left:0px;top:62px;width:118px"></div><div class="rb" style="left:120px;top:62px;width:94px"></div><div class="rb" style="left:216px;top:62px;width:220px"></div><div class="rb" style="left:438px;top:62px;width:198px"></div><div class="rb" style="left:640px;top:62px;width:196px"></div><div class="rb" style="left:838px;top:62px;width:198px"></div><div class="rb" style="left:1038px;top:62px;width:198px"></div><div class="rb" style="left:1238px;top:62px;width:198px"></div><div class="rb" style="left:1440px;top:62px;width:196px"></div><div class="rb" style="left:1638px;top:62px;width:198px"></div><div class="rb" style="left:1838px;top:62px;width:92px"></div><div class="rb" style="left:1932px;top:62px;width:198px"></div></div><div class="row" style="left:0;top:64px"><div class="cell n" style="left:0;width:119px;text-align:center">2</div><div class="cb" style="left:154px;top:15px"></div><div class="cell n" style="left:242px">02</div><div class="cell lnk" style="left:464px">红星超市仓</div><div class="badge">正常</div><div class="cell n" style="left:1264px">2022–03–10</div><div class="a" style="left:1916px;top:0;width:14px;height:64px;background:linear-gradient(to right,rgba(0,0,0,0),rgba(0,0,0,0.075))"></div><div class="a" style="left:1930px;top:0;width:200px;height:64px;background:#fff"></div><svg style="left:1991px;top:21px" width="24" height="26" viewBox="0 0 24 26"><path d="M10.7 3.5 H5 a3 3 0 0 0-3 3 V20.5 a3 3 0 0 0 3 3 H17 a3 3 0 0 0 3-3 V12.7" fill="none" stroke="#222" stroke-width="2.1"/><path d="M7.9 21 L8.2 17 L14.2 7.6 L17.2 9.5 L11.3 19 Z" fill="none" stroke="#222" stroke-width="1.9" stroke-linejoin="round"/><path d="M15.8 6.2 L17.3 3 L20.3 4.8 L18.6 7.6" fill="none" stroke="#222" stroke-width="1.9"/></svg><svg style="left:2047px;top:21px" width="24" height="26" viewBox="0 0 24 26"><path d="M1.2 6.8 H20.7 M8.3 6.5 V4.2 a2.6 2.6 0 0 1 5.2 0 V6.5 M3.2 10.2 V21.5 a2.7 2.7 0 0 0 2.7 2.7 H16 a2.7 2.7 0 0 0 2.7-2.7 V10.2 M8 13 V19.8 M13.9 13 V19.8" fill="none" stroke="#222" stroke-width="2.1"/></svg><div class="rb" style="left:0px;top:62px;width:118px"></div><div class="rb" style="left:120px;top:62px;width:94px"></div><div class="rb" style="left:216px;top:62px;width:220px"></div><div class="rb" style="left:438px;top:62px;width:198px"></div><div class="rb" style="left:640px;top:62px;width:196px"></div><div class="rb" style="left:838px;top:62px;width:198px"></div><div class="rb" style="left:1038px;top:62px;width:198px"></div><div class="rb" style="left:1238px;top:62px;width:198px"></div><div class="rb" style="left:1440px;top:62px;width:196px"></div><div class="rb" style="left:1638px;top:62px;width:198px"></div><div class="rb" style="left:1838px;top:62px;width:92px"></div><div class="rb" style="left:1932px;top:62px;width:198px"></div></div><div class="row" style="left:0;top:128px"><div class="cell n" style="left:0;width:119px;text-align:center">3</div><div class="cb" style="left:154px;top:15px"></div><div class="cell n" style="left:242px">03</div><div class="cell lnk" style="left:464px">退货仓</div><div class="badge">正常</div><div class="cell n" style="left:1264px">2022–03–10</div><div class="a" style="left:1916px;top:0;width:14px;height:64px;background:linear-gradient(to right,rgba(0,0,0,0),rgba(0,0,0,0.075))"></div><div class="a" style="left:1930px;top:0;width:200px;height:64px;background:#fff"></div><svg style="left:1991px;top:21px" width="24" height="26" viewBox="0 0 24 26"><path d="M10.7 3.5 H5 a3 3 0 0 0-3 3 V20.5 a3 3 0 0 0 3 3 H17 a3 3 0 0 0 3-3 V12.7" fill="none" stroke="#222" stroke-width="2.1"/><path d="M7.9 21 L8.2 17 L14.2 7.6 L17.2 9.5 L11.3 19 Z" fill="none" stroke="#222" stroke-width="1.9" stroke-linejoin="round"/><path d="M15.8 6.2 L17.3 3 L20.3 4.8 L18.6 7.6" fill="none" stroke="#222" stroke-width="1.9"/></svg><svg style="left:2047px;top:21px" width="24" height="26" viewBox="0 0 24 26"><path d="M1.2 6.8 H20.7 M8.3 6.5 V4.2 a2.6 2.6 0 0 1 5.2 0 V6.5 M3.2 10.2 V21.5 a2.7 2.7 0 0 0 2.7 2.7 H16 a2.7 2.7 0 0 0 2.7-2.7 V10.2 M8 13 V19.8 M13.9 13 V19.8" fill="none" stroke="#222" stroke-width="2.1"/></svg><div class="rb" style="left:0px;top:62px;width:118px"></div><div class="rb" style="left:120px;top:62px;width:94px"></div><div class="rb" style="left:216px;top:62px;width:220px"></div><div class="rb" style="left:438px;top:62px;width:198px"></div><div class="rb" style="left:640px;top:62px;width:196px"></div><div class="rb" style="left:838px;top:62px;width:198px"></div><div class="rb" style="left:1038px;top:62px;width:198px"></div><div class="rb" style="left:1238px;top:62px;width:198px"></div><div class="rb" style="left:1440px;top:62px;width:196px"></div><div class="rb" style="left:1638px;top:62px;width:198px"></div><div class="rb" style="left:1838px;top:62px;width:92px"></div><div class="rb" style="left:1932px;top:62px;width:198px"></div></div><div class="row" style="left:0;top:192px"><div class="cell n" style="left:0;width:119px;text-align:center">4</div><div class="cb" style="left:154px;top:15px"></div><div class="cell n" style="left:242px">04</div><div class="cell lnk" style="left:464px">如家供应仓</div><div class="badge">正常</div><div class="cell n" style="left:1264px">2022–03–10</div><div class="a" style="left:1916px;top:0;width:14px;height:64px;background:linear-gradient(to right,rgba(0,0,0,0),rgba(0,0,0,0.075))"></div><div class="a" style="left:1930px;top:0;width:200px;height:64px;background:#fff"></div><svg style="left:1991px;top:21px" width="24" height="26" viewBox="0 0 24 26"><path d="M10.7 3.5 H5 a3 3 0 0 0-3 3 V20.5 a3 3 0 0 0 3 3 H17 a3 3 0 0 0 3-3 V12.7" fill="none" stroke="#222" stroke-width="2.1"/><path d="M7.9 21 L8.2 17 L14.2 7.6 L17.2 9.5 L11.3 19 Z" fill="none" stroke="#222" stroke-width="1.9" stroke-linejoin="round"/><path d="M15.8 6.2 L17.3 3 L20.3 4.8 L18.6 7.6" fill="none" stroke="#222" stroke-width="1.9"/></svg><svg style="left:2047px;top:21px" width="24" height="26" viewBox="0 0 24 26"><path d="M1.2 6.8 H20.7 M8.3 6.5 V4.2 a2.6 2.6 0 0 1 5.2 0 V6.5 M3.2 10.2 V21.5 a2.7 2.7 0 0 0 2.7 2.7 H16 a2.7 2.7 0 0 0 2.7-2.7 V10.2 M8 13 V19.8 M13.9 13 V19.8" fill="none" stroke="#222" stroke-width="2.1"/></svg><div class="rb" style="left:0px;top:62px;width:118px"></div><div class="rb" style="left:120px;top:62px;width:94px"></div><div class="rb" style="left:216px;top:62px;width:220px"></div><div class="rb" style="left:438px;top:62px;width:198px"></div><div class="rb" style="left:640px;top:62px;width:196px"></div><div class="rb" style="left:838px;top:62px;width:198px"></div><div class="rb" style="left:1038px;top:62px;width:198px"></div><div class="rb" style="left:1238px;top:62px;width:198px"></div><div class="rb" style="left:1440px;top:62px;width:196px"></div><div class="rb" style="left:1638px;top:62px;width:198px"></div><div class="rb" style="left:1838px;top:62px;width:92px"></div><div class="rb" style="left:1932px;top:62px;width:198px"></div></div><div class="row" style="left:0;top:256px"><div class="cell n" style="left:0;width:119px;text-align:center">5</div><div class="cb" style="left:154px;top:15px"></div><div class="cell n" style="left:242px">05</div><div class="cell lnk" style="left:464px">产成品仓</div><div class="cell" style="left:664px">是</div><div class="badge">正常</div><div class="cell n" style="left:1264px">2022–03–21</div><div class="a" style="left:1916px;top:0;width:14px;height:64px;background:linear-gradient(to right,rgba(0,0,0,0),rgba(0,0,0,0.075))"></div><div class="a" style="left:1930px;top:0;width:200px;height:64px;background:#fff"></div><svg style="left:1991px;top:21px" width="24" height="26" viewBox="0 0 24 26"><path d="M10.7 3.5 H5 a3 3 0 0 0-3 3 V20.5 a3 3 0 0 0 3 3 H17 a3 3 0 0 0 3-3 V12.7" fill="none" stroke="#222" stroke-width="2.1"/><path d="M7.9 21 L8.2 17 L14.2 7.6 L17.2 9.5 L11.3 19 Z" fill="none" stroke="#222" stroke-width="1.9" stroke-linejoin="round"/><path d="M15.8 6.2 L17.3 3 L20.3 4.8 L18.6 7.6" fill="none" stroke="#222" stroke-width="1.9"/></svg><svg style="left:2047px;top:21px" width="24" height="26" viewBox="0 0 24 26"><path d="M1.2 6.8 H20.7 M8.3 6.5 V4.2 a2.6 2.6 0 0 1 5.2 0 V6.5 M3.2 10.2 V21.5 a2.7 2.7 0 0 0 2.7 2.7 H16 a2.7 2.7 0 0 0 2.7-2.7 V10.2 M8 13 V19.8 M13.9 13 V19.8" fill="none" stroke="#222" stroke-width="2.1"/></svg><div class="rb" style="left:0px;top:62px;width:118px"></div><div class="rb" style="left:120px;top:62px;width:94px"></div><div class="rb" style="left:216px;top:62px;width:220px"></div><div class="rb" style="left:438px;top:62px;width:198px"></div><div class="rb" style="left:640px;top:62px;width:196px"></div><div class="rb" style="left:838px;top:62px;width:198px"></div><div class="rb" style="left:1038px;top:62px;width:198px"></div><div class="rb" style="left:1238px;top:62px;width:198px"></div><div class="rb" style="left:1440px;top:62px;width:196px"></div><div class="rb" style="left:1638px;top:62px;width:198px"></div><div class="rb" style="left:1838px;top:62px;width:92px"></div><div class="rb" style="left:1932px;top:62px;width:198px"></div></div><div class="row" style="left:0;top:320px"><div class="cell n" style="left:0;width:119px;text-align:center">6</div><div class="cb" style="left:154px;top:15px"></div><div class="cell n" style="left:242px">06</div><div class="cell lnk" style="left:464px">半成品仓</div><div class="badge">正常</div><div class="cell n" style="left:1264px">2022–03–24</div><div class="a" style="left:1916px;top:0;width:14px;height:64px;background:linear-gradient(to right,rgba(0,0,0,0),rgba(0,0,0,0.075))"></div><div class="a" style="left:1930px;top:0;width:200px;height:64px;background:#fff"></div><svg style="left:1991px;top:21px" width="24" height="26" viewBox="0 0 24 26"><path d="M10.7 3.5 H5 a3 3 0 0 0-3 3 V20.5 a3 3 0 0 0 3 3 H17 a3 3 0 0 0 3-3 V12.7" fill="none" stroke="#222" stroke-width="2.1"/><path d="M7.9 21 L8.2 17 L14.2 7.6 L17.2 9.5 L11.3 19 Z" fill="none" stroke="#222" stroke-width="1.9" stroke-linejoin="round"/><path d="M15.8 6.2 L17.3 3 L20.3 4.8 L18.6 7.6" fill="none" stroke="#222" stroke-width="1.9"/></svg><svg style="left:2047px;top:21px" width="24" height="26" viewBox="0 0 24 26"><path d="M1.2 6.8 H20.7 M8.3 6.5 V4.2 a2.6 2.6 0 0 1 5.2 0 V6.5 M3.2 10.2 V21.5 a2.7 2.7 0 0 0 2.7 2.7 H16 a2.7 2.7 0 0 0 2.7-2.7 V10.2 M8 13 V19.8 M13.9 13 V19.8" fill="none" stroke="#222" stroke-width="2.1"/></svg><div class="rb" style="left:0px;top:62px;width:118px"></div><div class="rb" style="left:120px;top:62px;width:94px"></div><div class="rb" style="left:216px;top:62px;width:220px"></div><div class="rb" style="left:438px;top:62px;width:198px"></div><div class="rb" style="left:640px;top:62px;width:196px"></div><div class="rb" style="left:838px;top:62px;width:198px"></div><div class="rb" style="left:1038px;top:62px;width:198px"></div><div class="rb" style="left:1238px;top:62px;width:198px"></div><div class="rb" style="left:1440px;top:62px;width:196px"></div><div class="rb" style="left:1638px;top:62px;width:198px"></div><div class="rb" style="left:1838px;top:62px;width:92px"></div><div class="rb" style="left:1932px;top:62px;width:198px"></div></div><div class="row" style="left:0;top:384px"><div class="cell n" style="left:0;width:119px;text-align:center">7</div><div class="cb" style="left:154px;top:15px"></div><div class="cell n" style="left:242px">07</div><div class="cell lnk" style="left:464px">原材料仓</div><div class="badge">正常</div><div class="cell n" style="left:1264px">2022–03–24</div><div class="a" style="left:1916px;top:0;width:14px;height:64px;background:linear-gradient(to right,rgba(0,0,0,0),rgba(0,0,0,0.075))"></div><div class="a" style="left:1930px;top:0;width:200px;height:64px;background:#fff"></div><svg style="left:1991px;top:21px" width="24" height="26" viewBox="0 0 24 26"><path d="M10.7 3.5 H5 a3 3 0 0 0-3 3 V20.5 a3 3 0 0 0 3 3 H17 a3 3 0 0 0 3-3 V12.7" fill="none" stroke="#222" stroke-width="2.1"/><path d="M7.9 21 L8.2 17 L14.2 7.6 L17.2 9.5 L11.3 19 Z" fill="none" stroke="#222" stroke-width="1.9" stroke-linejoin="round"/><path d="M15.8 6.2 L17.3 3 L20.3 4.8 L18.6 7.6" fill="none" stroke="#222" stroke-width="1.9"/></svg><svg style="left:2047px;top:21px" width="24" height="26" viewBox="0 0 24 26"><path d="M1.2 6.8 H20.7 M8.3 6.5 V4.2 a2.6 2.6 0 0 1 5.2 0 V6.5 M3.2 10.2 V21.5 a2.7 2.7 0 0 0 2.7 2.7 H16 a2.7 2.7 0 0 0 2.7-2.7 V10.2 M8 13 V19.8 M13.9 13 V19.8" fill="none" stroke="#222" stroke-width="2.1"/></svg><div class="rb" style="left:0px;top:62px;width:118px"></div><div class="rb" style="left:120px;top:62px;width:94px"></div><div class="rb" style="left:216px;top:62px;width:220px"></div><div class="rb" style="left:438px;top:62px;width:198px"></div><div class="rb" style="left:640px;top:62px;width:196px"></div><div class="rb" style="left:838px;top:62px;width:198px"></div><div class="rb" style="left:1038px;top:62px;width:198px"></div><div class="rb" style="left:1238px;top:62px;width:198px"></div><div class="rb" style="left:1440px;top:62px;width:196px"></div><div class="rb" style="left:1638px;top:62px;width:198px"></div><div class="rb" style="left:1838px;top:62px;width:92px"></div><div class="rb" style="left:1932px;top:62px;width:198px"></div></div><div class="row" style="left:0;top:448px"><div class="cell n" style="left:0;width:119px;text-align:center">8</div><div class="cb" style="left:154px;top:15px"></div><div class="cell n" style="left:242px">08</div><div class="cell lnk" style="left:464px">水果仓</div><div class="badge">正常</div><div class="cell n" style="left:1264px">2022–04–07</div><div class="a" style="left:1916px;top:0;width:14px;height:64px;background:linear-gradient(to right,rgba(0,0,0,0),rgba(0,0,0,0.075))"></div><div class="a" style="left:1930px;top:0;width:200px;height:64px;background:#fff"></div><svg style="left:1991px;top:21px" width="24" height="26" viewBox="0 0 24 26"><path d="M10.7 3.5 H5 a3 3 0 0 0-3 3 V20.5 a3 3 0 0 0 3 3 H17 a3 3 0 0 0 3-3 V12.7" fill="none" stroke="#222" stroke-width="2.1"/><path d="M7.9 21 L8.2 17 L14.2 7.6 L17.2 9.5 L11.3 19 Z" fill="none" stroke="#222" stroke-width="1.9" stroke-linejoin="round"/><path d="M15.8 6.2 L17.3 3 L20.3 4.8 L18.6 7.6" fill="none" stroke="#222" stroke-width="1.9"/></svg><svg style="left:2047px;top:21px" width="24" height="26" viewBox="0 0 24 26"><path d="M1.2 6.8 H20.7 M8.3 6.5 V4.2 a2.6 2.6 0 0 1 5.2 0 V6.5 M3.2 10.2 V21.5 a2.7 2.7 0 0 0 2.7 2.7 H16 a2.7 2.7 0 0 0 2.7-2.7 V10.2 M8 13 V19.8 M13.9 13 V19.8" fill="none" stroke="#222" stroke-width="2.1"/></svg><div class="rb" style="left:0px;top:62px;width:118px"></div><div class="rb" style="left:120px;top:62px;width:94px"></div><div class="rb" style="left:216px;top:62px;width:220px"></div><div class="rb" style="left:438px;top:62px;width:198px"></div><div class="rb" style="left:640px;top:62px;width:196px"></div><div class="rb" style="left:838px;top:62px;width:198px"></div><div class="rb" style="left:1038px;top:62px;width:198px"></div><div class="rb" style="left:1238px;top:62px;width:198px"></div><div class="rb" style="left:1440px;top:62px;width:196px"></div><div class="rb" style="left:1638px;top:62px;width:198px"></div><div class="rb" style="left:1838px;top:62px;width:92px"></div><div class="rb" style="left:1932px;top:62px;width:198px"></div></div><div class="row" style="left:0;top:512px"><div class="cell n" style="left:0;width:119px;text-align:center">9</div><div class="cb" style="left:154px;top:15px"></div><div class="cell n" style="left:242px">09</div><div class="cell lnk" style="left:464px">汽配</div><div class="badge">正常</div><div class="cell n" style="left:1264px">2022–05–09</div><div class="a" style="left:1916px;top:0;width:14px;height:64px;background:linear-gradient(to right,rgba(0,0,0,0),rgba(0,0,0,0.075))"></div><div class="a" style="left:1930px;top:0;width:200px;height:64px;background:#fff"></div><svg style="left:1991px;top:21px" width="24" height="26" viewBox="0 0 24 26"><path d="M10.7 3.5 H5 a3 3 0 0 0-3 3 V20.5 a3 3 0 0 0 3 3 H17 a3 3 0 0 0 3-3 V12.7" fill="none" stroke="#222" stroke-width="2.1"/><path d="M7.9 21 L8.2 17 L14.2 7.6 L17.2 9.5 L11.3 19 Z" fill="none" stroke="#222" stroke-width="1.9" stroke-linejoin="round"/><path d="M15.8 6.2 L17.3 3 L20.3 4.8 L18.6 7.6" fill="none" stroke="#222" stroke-width="1.9"/></svg><svg style="left:2047px;top:21px" width="24" height="26" viewBox="0 0 24 26"><path d="M1.2 6.8 H20.7 M8.3 6.5 V4.2 a2.6 2.6 0 0 1 5.2 0 V6.5 M3.2 10.2 V21.5 a2.7 2.7 0 0 0 2.7 2.7 H16 a2.7 2.7 0 0 0 2.7-2.7 V10.2 M8 13 V19.8 M13.9 13 V19.8" fill="none" stroke="#222" stroke-width="2.1"/></svg><div class="rb" style="left:0px;top:62px;width:118px"></div><div class="rb" style="left:120px;top:62px;width:94px"></div><div class="rb" style="left:216px;top:62px;width:220px"></div><div class="rb" style="left:438px;top:62px;width:198px"></div><div class="rb" style="left:640px;top:62px;width:196px"></div><div class="rb" style="left:838px;top:62px;width:198px"></div><div class="rb" style="left:1038px;top:62px;width:198px"></div><div class="rb" style="left:1238px;top:62px;width:198px"></div><div class="rb" style="left:1440px;top:62px;width:196px"></div><div class="rb" style="left:1638px;top:62px;width:198px"></div><div class="rb" style="left:1838px;top:62px;width:92px"></div><div class="rb" style="left:1932px;top:62px;width:198px"></div></div><div class="row" style="left:0;top:576px"><div class="cell n" style="left:0;width:119px;text-align:center">10</div><div class="cb" style="left:154px;top:15px"></div><div class="cell n" style="left:242px">10</div><div class="cell lnk" style="left:464px">期初仓</div><div class="badge">正常</div><div class="cell n" style="left:1264px">2022–05–09</div><div class="a" style="left:1916px;top:0;width:14px;height:64px;background:linear-gradient(to right,rgba(0,0,0,0),rgba(0,0,0,0.075))"></div><div class="a" style="left:1930px;top:0;width:200px;height:64px;background:#fff"></div><svg style="left:1991px;top:21px" width="24" height="26" viewBox="0 0 24 26"><path d="M10.7 3.5 H5 a3 3 0 0 0-3 3 V20.5 a3 3 0 0 0 3 3 H17 a3 3 0 0 0 3-3 V12.7" fill="none" stroke="#222" stroke-width="2.1"/><path d="M7.9 21 L8.2 17 L14.2 7.6 L17.2 9.5 L11.3 19 Z" fill="none" stroke="#222" stroke-width="1.9" stroke-linejoin="round"/><path d="M15.8 6.2 L17.3 3 L20.3 4.8 L18.6 7.6" fill="none" stroke="#222" stroke-width="1.9"/></svg><svg style="left:2047px;top:21px" width="24" height="26" viewBox="0 0 24 26"><path d="M1.2 6.8 H20.7 M8.3 6.5 V4.2 a2.6 2.6 0 0 1 5.2 0 V6.5 M3.2 10.2 V21.5 a2.7 2.7 0 0 0 2.7 2.7 H16 a2.7 2.7 0 0 0 2.7-2.7 V10.2 M8 13 V19.8 M13.9 13 V19.8" fill="none" stroke="#222" stroke-width="2.1"/></svg><div class="rb" style="left:0px;top:62px;width:118px"></div><div class="rb" style="left:120px;top:62px;width:94px"></div><div class="rb" style="left:216px;top:62px;width:220px"></div><div class="rb" style="left:438px;top:62px;width:198px"></div><div class="rb" style="left:640px;top:62px;width:196px"></div><div class="rb" style="left:838px;top:62px;width:198px"></div><div class="rb" style="left:1038px;top:62px;width:198px"></div><div class="rb" style="left:1238px;top:62px;width:198px"></div><div class="rb" style="left:1440px;top:62px;width:196px"></div><div class="rb" style="left:1638px;top:62px;width:198px"></div><div class="rb" style="left:1838px;top:62px;width:92px"></div><div class="rb" style="left:1932px;top:62px;width:198px"></div></div><div class="row" style="left:0;top:640px"><div class="cell n" style="left:0;width:119px;text-align:center">11</div><div class="cb" style="left:154px;top:15px"></div><div class="cell n" style="left:242px">100</div><div class="cell lnk" style="left:464px">学校仓</div><div class="cell" style="left:664px">否</div><div class="badge">正常</div><div class="cell n" style="left:1264px">2025–02–12</div><div class="cell" style="left:1464px">否</div><div class="a" style="left:1916px;top:0;width:14px;height:64px;background:linear-gradient(to right,rgba(0,0,0,0),rgba(0,0,0,0.075))"></div><div class="a" style="left:1930px;top:0;width:200px;height:64px;background:#fff"></div><svg style="left:1991px;top:21px" width="24" height="26" viewBox="0 0 24 26"><path d="M10.7 3.5 H5 a3 3 0 0 0-3 3 V20.5 a3 3 0 0 0 3 3 H17 a3 3 0 0 0 3-3 V12.7" fill="none" stroke="#222" stroke-width="2.1"/><path d="M7.9 21 L8.2 17 L14.2 7.6 L17.2 9.5 L11.3 19 Z" fill="none" stroke="#222" stroke-width="1.9" stroke-linejoin="round"/><path d="M15.8 6.2 L17.3 3 L20.3 4.8 L18.6 7.6" fill="none" stroke="#222" stroke-width="1.9"/></svg><svg style="left:2047px;top:21px" width="24" height="26" viewBox="0 0 24 26"><path d="M1.2 6.8 H20.7 M8.3 6.5 V4.2 a2.6 2.6 0 0 1 5.2 0 V6.5 M3.2 10.2 V21.5 a2.7 2.7 0 0 0 2.7 2.7 H16 a2.7 2.7 0 0 0 2.7-2.7 V10.2 M8 13 V19.8 M13.9 13 V19.8" fill="none" stroke="#222" stroke-width="2.1"/></svg><div class="rb" style="left:0px;top:62px;width:118px"></div><div class="rb" style="left:120px;top:62px;width:94px"></div><div class="rb" style="left:216px;top:62px;width:220px"></div><div class="rb" style="left:438px;top:62px;width:198px"></div><div class="rb" style="left:640px;top:62px;width:196px"></div><div class="rb" style="left:838px;top:62px;width:198px"></div><div class="rb" style="left:1038px;top:62px;width:198px"></div><div class="rb" style="left:1238px;top:62px;width:198px"></div><div class="rb" style="left:1440px;top:62px;width:196px"></div><div class="rb" style="left:1638px;top:62px;width:198px"></div><div class="rb" style="left:1838px;top:62px;width:92px"></div><div class="rb" style="left:1932px;top:62px;width:198px"></div></div><div class="row" style="left:0;top:704px"><div class="cell n" style="left:0;width:119px;text-align:center">12</div><div class="cb" style="left:154px;top:15px"></div><div class="cell n" style="left:242px">101</div><div class="cell lnk" style="left:464px">五年二班</div><div class="cell" style="left:664px">否</div><div class="badge">正常</div><div class="cell n" style="left:1264px">2025–02–12</div><div class="cell" style="left:1464px">否</div><div class="a" style="left:1916px;top:0;width:14px;height:64px;background:linear-gradient(to right,rgba(0,0,0,0),rgba(0,0,0,0.075))"></div><div class="a" style="left:1930px;top:0;width:200px;height:64px;background:#fff"></div><svg style="left:1991px;top:21px" width="24" height="26" viewBox="0 0 24 26"><path d="M10.7 3.5 H5 a3 3 0 0 0-3 3 V20.5 a3 3 0 0 0 3 3 H17 a3 3 0 0 0 3-3 V12.7" fill="none" stroke="#222" stroke-width="2.1"/><path d="M7.9 21 L8.2 17 L14.2 7.6 L17.2 9.5 L11.3 19 Z" fill="none" stroke="#222" stroke-width="1.9" stroke-linejoin="round"/><path d="M15.8 6.2 L17.3 3 L20.3 4.8 L18.6 7.6" fill="none" stroke="#222" stroke-width="1.9"/></svg><svg style="left:2047px;top:21px" width="24" height="26" viewBox="0 0 24 26"><path d="M1.2 6.8 H20.7 M8.3 6.5 V4.2 a2.6 2.6 0 0 1 5.2 0 V6.5 M3.2 10.2 V21.5 a2.7 2.7 0 0 0 2.7 2.7 H16 a2.7 2.7 0 0 0 2.7-2.7 V10.2 M8 13 V19.8 M13.9 13 V19.8" fill="none" stroke="#222" stroke-width="2.1"/></svg><div class="rb" style="left:0px;top:62px;width:118px"></div><div class="rb" style="left:120px;top:62px;width:94px"></div><div class="rb" style="left:216px;top:62px;width:220px"></div><div class="rb" style="left:438px;top:62px;width:198px"></div><div class="rb" style="left:640px;top:62px;width:196px"></div><div class="rb" style="left:838px;top:62px;width:198px"></div><div class="rb" style="left:1038px;top:62px;width:198px"></div><div class="rb" style="left:1238px;top:62px;width:198px"></div><div class="rb" style="left:1440px;top:62px;width:196px"></div><div class="rb" style="left:1638px;top:62px;width:198px"></div><div class="rb" style="left:1838px;top:62px;width:92px"></div><div class="rb" style="left:1932px;top:62px;width:198px"></div></div><div class="row" style="left:0;top:768px"><div class="cell n" style="left:0;width:119px;text-align:center">13</div><div class="cb" style="left:154px;top:15px"></div><div class="cell n" style="left:242px">102</div><div class="cell lnk" style="left:464px">A口腔门诊</div><div class="badge">正常</div><div class="cell n" style="left:1264px">2025–02–21</div><div class="a" style="left:1916px;top:0;width:14px;height:64px;background:linear-gradient(to right,rgba(0,0,0,0),rgba(0,0,0,0.075))"></div><div class="a" style="left:1930px;top:0;width:200px;height:64px;background:#fff"></div><svg style="left:1991px;top:21px" width="24" height="26" viewBox="0 0 24 26"><path d="M10.7 3.5 H5 a3 3 0 0 0-3 3 V20.5 a3 3 0 0 0 3 3 H17 a3 3 0 0 0 3-3 V12.7" fill="none" stroke="#222" stroke-width="2.1"/><path d="M7.9 21 L8.2 17 L14.2 7.6 L17.2 9.5 L11.3 19 Z" fill="none" stroke="#222" stroke-width="1.9" stroke-linejoin="round"/><path d="M15.8 6.2 L17.3 3 L20.3 4.8 L18.6 7.6" fill="none" stroke="#222" stroke-width="1.9"/></svg><svg style="left:2047px;top:21px" width="24" height="26" viewBox="0 0 24 26"><path d="M1.2 6.8 H20.7 M8.3 6.5 V4.2 a2.6 2.6 0 0 1 5.2 0 V6.5 M3.2 10.2 V21.5 a2.7 2.7 0 0 0 2.7 2.7 H16 a2.7 2.7 0 0 0 2.7-2.7 V10.2 M8 13 V19.8 M13.9 13 V19.8" fill="none" stroke="#222" stroke-width="2.1"/></svg><div class="rb" style="left:0px;top:62px;width:118px"></div><div class="rb" style="left:120px;top:62px;width:94px"></div><div class="rb" style="left:216px;top:62px;width:220px"></div><div class="rb" style="left:438px;top:62px;width:198px"></div><div class="rb" style="left:640px;top:62px;width:196px"></div><div class="rb" style="left:838px;top:62px;width:198px"></div><div class="rb" style="left:1038px;top:62px;width:198px"></div><div class="rb" style="left:1238px;top:62px;width:198px"></div><div class="rb" style="left:1440px;top:62px;width:196px"></div><div class="rb" style="left:1638px;top:62px;width:198px"></div><div class="rb" style="left:1838px;top:62px;width:92px"></div><div class="rb" style="left:1932px;top:62px;width:198px"></div></div><div class="row" style="left:0;top:832px"><div class="cell n" style="left:0;width:119px;text-align:center">14</div><div class="cb" style="left:154px;top:15px"></div><div class="cell n" style="left:242px">103</div><div class="cell lnk" style="left:464px">测试库</div><div class="badge">正常</div><div class="cell n" style="left:1264px">2025–04–08</div><div class="a" style="left:1916px;top:0;width:14px;height:64px;background:linear-gradient(to right,rgba(0,0,0,0),rgba(0,0,0,0.075))"></div><div class="a" style="left:1930px;top:0;width:200px;height:64px;background:#fff"></div><svg style="left:1991px;top:21px" width="24" height="26" viewBox="0 0 24 26"><path d="M10.7 3.5 H5 a3 3 0 0 0-3 3 V20.5 a3 3 0 0 0 3 3 H17 a3 3 0 0 0 3-3 V12.7" fill="none" stroke="#222" stroke-width="2.1"/><path d="M7.9 21 L8.2 17 L14.2 7.6 L17.2 9.5 L11.3 19 Z" fill="none" stroke="#222" stroke-width="1.9" stroke-linejoin="round"/><path d="M15.8 6.2 L17.3 3 L20.3 4.8 L18.6 7.6" fill="none" stroke="#222" stroke-width="1.9"/></svg><svg style="left:2047px;top:21px" width="24" height="26" viewBox="0 0 24 26"><path d="M1.2 6.8 H20.7 M8.3 6.5 V4.2 a2.6 2.6 0 0 1 5.2 0 V6.5 M3.2 10.2 V21.5 a2.7 2.7 0 0 0 2.7 2.7 H16 a2.7 2.7 0 0 0 2.7-2.7 V10.2 M8 13 V19.8 M13.9 13 V19.8" fill="none" stroke="#222" stroke-width="2.1"/></svg><div class="rb" style="left:0px;top:62px;width:118px"></div><div class="rb" style="left:120px;top:62px;width:94px"></div><div class="rb" style="left:216px;top:62px;width:220px"></div><div class="rb" style="left:438px;top:62px;width:198px"></div><div class="rb" style="left:640px;top:62px;width:196px"></div><div class="rb" style="left:838px;top:62px;width:198px"></div><div class="rb" style="left:1038px;top:62px;width:198px"></div><div class="rb" style="left:1238px;top:62px;width:198px"></div><div class="rb" style="left:1440px;top:62px;width:196px"></div><div class="rb" style="left:1638px;top:62px;width:198px"></div><div class="rb" style="left:1838px;top:62px;width:92px"></div><div class="rb" style="left:1932px;top:62px;width:198px"></div></div><div class="row" style="left:0;top:896px"><div class="cell n" style="left:0;width:119px;text-align:center">15</div><div class="cb" style="left:154px;top:15px"></div><div class="cell n" style="left:242px">104</div><div class="cell lnk" style="left:464px">永泰画廊</div><div class="badge">正常</div><div class="cell n" style="left:1264px">2025–06–27</div><div class="a" style="left:1916px;top:0;width:14px;height:64px;background:linear-gradient(to right,rgba(0,0,0,0),rgba(0,0,0,0.075))"></div><div class="a" style="left:1930px;top:0;width:200px;height:64px;background:#fff"></div><svg style="left:1991px;top:21px" width="24" height="26" viewBox="0 0 24 26"><path d="M10.7 3.5 H5 a3 3 0 0 0-3 3 V20.5 a3 3 0 0 0 3 3 H17 a3 3 0 0 0 3-3 V12.7" fill="none" stroke="#222" stroke-width="2.1"/><path d="M7.9 21 L8.2 17 L14.2 7.6 L17.2 9.5 L11.3 19 Z" fill="none" stroke="#222" stroke-width="1.9" stroke-linejoin="round"/><path d="M15.8 6.2 L17.3 3 L20.3 4.8 L18.6 7.6" fill="none" stroke="#222" stroke-width="1.9"/></svg><svg style="left:2047px;top:21px" width="24" height="26" viewBox="0 0 24 26"><path d="M1.2 6.8 H20.7 M8.3 6.5 V4.2 a2.6 2.6 0 0 1 5.2 0 V6.5 M3.2 10.2 V21.5 a2.7 2.7 0 0 0 2.7 2.7 H16 a2.7 2.7 0 0 0 2.7-2.7 V10.2 M8 13 V19.8 M13.9 13 V19.8" fill="none" stroke="#222" stroke-width="2.1"/></svg><div class="rb" style="left:0px;top:62px;width:118px"></div><div class="rb" style="left:120px;top:62px;width:94px"></div><div class="rb" style="left:216px;top:62px;width:220px"></div><div class="rb" style="left:438px;top:62px;width:198px"></div><div class="rb" style="left:640px;top:62px;width:196px"></div><div class="rb" style="left:838px;top:62px;width:198px"></div><div class="rb" style="left:1038px;top:62px;width:198px"></div><div class="rb" style="left:1238px;top:62px;width:198px"></div><div class="rb" style="left:1440px;top:62px;width:196px"></div><div class="rb" style="left:1638px;top:62px;width:198px"></div><div class="rb" style="left:1838px;top:62px;width:92px"></div><div class="rb" style="left:1932px;top:62px;width:198px"></div></div></div>
<div class="a" style="left:652px;top:1272px;width:2130px;height:2px;background:#DDDDDD"></div>
<div class="a" style="left:652px;top:1274px;width:2130px;height:30px;background:linear-gradient(to bottom,#FFFFFF 40%,#ECECEC)"></div>
<div class="a" style="left:2568px;top:1274px;width:14px;height:30px;background:linear-gradient(to right,rgba(0,0,0,0),rgba(0,0,0,0.06))"></div>
<div class="a" style="left:652px;top:1304px;width:2130px;height:2px;background:#D2D2D2"></div>
<div class="a" style="left:866px;top:1274px;width:2px;height:30px;background:#E0E0E0"></div>
<div class="a" style="left:2581px;top:1274px;width:2px;height:30px;background:#E0E0E0"></div>
<div class="pg" style="left:1753px">每页显示</div>
<div class="a" style="left:1864px;top:1318px;width:120px;height:63px;border:2px solid #DDDDDD;border-radius:6px"></div>
<div class="pg" style="left:1881px;color:#111">100</div>
<svg style="left:1945px;top:1339px" width="26" height="16" viewBox="0 0 26 16"><path d="M2 2 L13 13 L24 2" fill="none" stroke="#555" stroke-width="2.4"/></svg>
<svg style="left:2040px;top:1337px" width="20" height="26" viewBox="0 0 20 26"><path d="M2.5 1 V25 M18 1 L6 13 L18 25" fill="none" stroke="#BBBBBB" stroke-width="2.4"/></svg>
<svg style="left:2094px;top:1337px" width="16" height="26" viewBox="0 0 16 26"><path d="M14 1 L2.5 13 L14 25" fill="none" stroke="#BBBBBB" stroke-width="2.4"/></svg>
<div class="pg" style="left:2140px">第</div>
<div class="a" style="left:2180px;top:1318px;width:120px;height:63px;border:2px solid #DDDDDD;border-radius:6px"></div>
<div class="pg" style="left:2197px;color:#111">1</div>
<div class="pg" style="left:2317px">页</div>
<svg style="left:2368px;top:1337px" width="16" height="26" viewBox="0 0 16 26"><path d="M2 1 L13.5 13 L2 25" fill="none" stroke="#333" stroke-width="2.4"/></svg>
<svg style="left:2420px;top:1337px" width="20" height="26" viewBox="0 0 20 26"><path d="M17.5 1 V25 M2 1 L14 13 L2 25" fill="none" stroke="#333" stroke-width="2.4"/></svg>
<div class="pg" style="left:2492px">共2页, 103条记录</div>
<div class="a" style="left:250px;top:1306px;width:2590px;height:80px;background:linear-gradient(to bottom,rgba(0,0,0,0),rgba(0,0,0,0.03))"></div>
</body>
</html>
